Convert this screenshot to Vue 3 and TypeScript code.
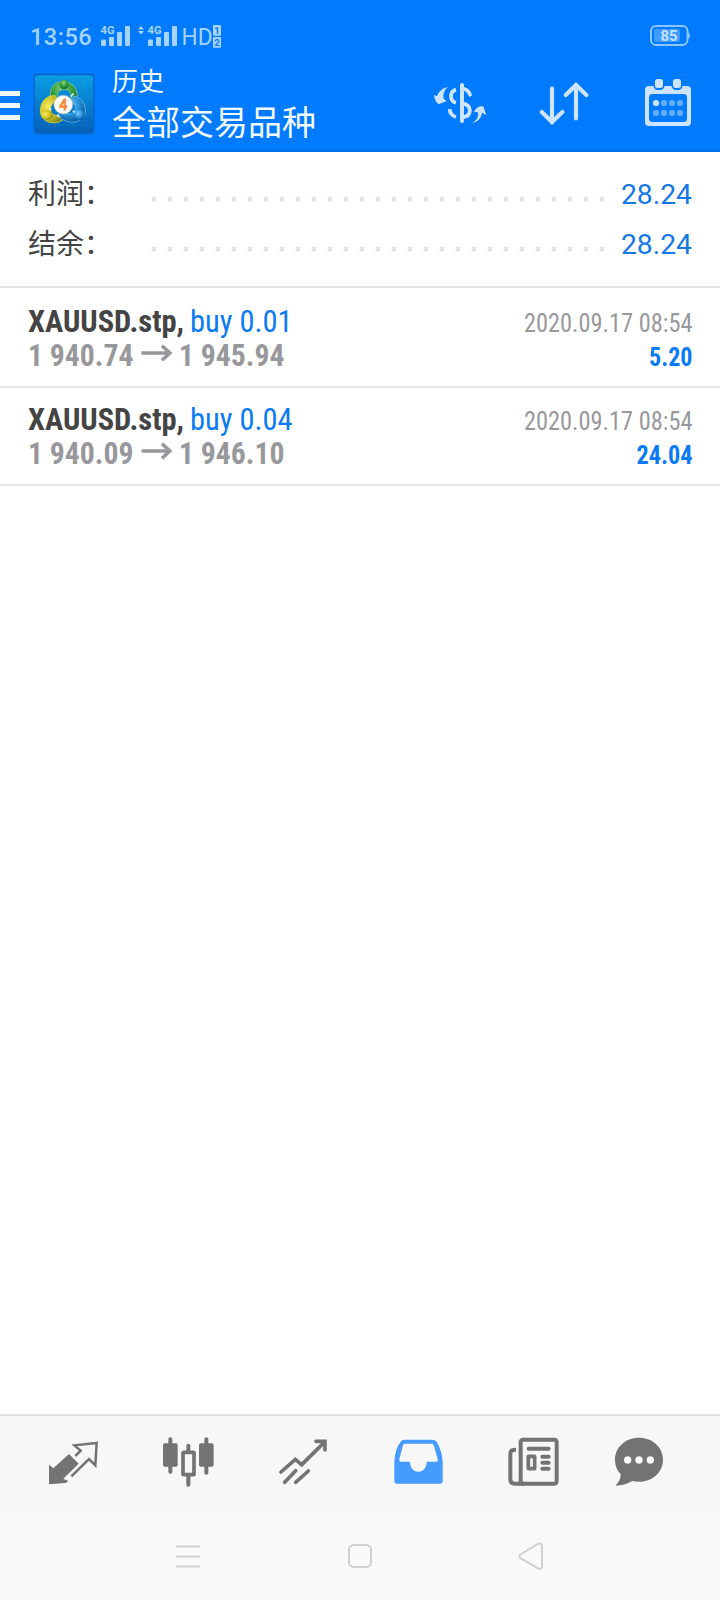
<script setup lang="ts">
interface Deal {
  symbol: string
  side: string
  sideWidth: number
  open: string
  close: string
  time: string
  profit: string
  profitWidth: number
}

const totals: { label: string; value: string }[] = [
  { label: '利润：', value: '28.24' },
  { label: '结余：', value: '28.24' },
]

const deals: Deal[] = [
  { symbol: 'XAUUSD.stp,', side: 'buy 0.01', sideWidth: 102.5, open: '1 940.74', close: '1 945.94', time: '2020.09.17 08:54', profit: '5.20', profitWidth: 43.5 },
  { symbol: 'XAUUSD.stp,', side: 'buy 0.04', sideWidth: 102.5, open: '1 940.09', close: '1 946.10', time: '2020.09.17 08:54', profit: '24.04', profitWidth: 56 },
]

const dots = Array.from({ length: 29 }, (_, i) => 3 + i * 16)
const bars = [
  { x: 0, h: 6.5 },
  { x: 8, h: 9 },
  { x: 16, h: 14 },
  { x: 24, h: 20 },
]
</script>

<template>
  <div class="screen">
    <header class="header">
      <div class="status">
        <span class="clock">13:56</span>
        <svg class="signals" width="126" height="28" viewBox="99 22 126 28">
          <g v-for="gx in [101, 148]" :key="gx" class="pale">
            <text :x="gx - 0.5" y="33.6" class="net" textLength="14" lengthAdjust="spacingAndGlyphs">4G</text>
            <rect v-for="b in bars" :key="b.x" :x="gx + b.x" :y="46 - b.h" width="5" :height="b.h" rx="1" />
          </g>
          <path class="pale" d="M138 29.500l3-3.500 3 3.500zM138 31l3 3.500 3-3.500z" />
          <text x="181.500" y="45" class="hd" textLength="31" lengthAdjust="spacingAndGlyphs">HD</text>
          <rect class="pale" x="213" y="25" width="8" height="10.800" rx="1" />
          <rect class="pale" x="213" y="37" width="8" height="10.800" rx="1" />
          <text x="217" y="33.800" class="sim">1</text>
          <text x="217" y="45.800" class="sim">2</text>
        </svg>
        <svg class="battery" width="42" height="24" viewBox="649 24 42 24">
          <rect x="651" y="26" width="36.500" height="19" rx="5" fill="none" stroke="#8cc6ff" stroke-width="2" />
          <rect x="654" y="29" width="26" height="13" rx="2" fill="#409bff" />
          <path d="M688 32.500q2 .5 2 3t-2 3z" fill="#8cc6ff" />
          <text x="669" y="41" class="charge">85</text>
        </svg>
      </div>
      <div class="toolbar">
        <div class="burger"><i /><i /><i /></div>
        <svg class="logo" width="62" height="62" viewBox="24 24 186 186">
          <defs>
            <linearGradient id="tile" x1="0" y1="0" x2="0" y2="1">
              <stop offset="0" stop-color="#0a9ce4" />
              <stop offset="1" stop-color="#0560b8" />
            </linearGradient>
            <radialGradient id="green" cx=".45" cy=".3" r=".7">
              <stop offset="0" stop-color="#8fd07c" />
              <stop offset=".5" stop-color="#37a33f" />
              <stop offset="1" stop-color="#0c6832" />
            </radialGradient>
            <radialGradient id="yellow" cx=".35" cy=".4" r=".7">
              <stop offset="0" stop-color="#f6ec62" />
              <stop offset=".55" stop-color="#cfc222" />
              <stop offset="1" stop-color="#7d8918" />
            </radialGradient>
            <radialGradient id="blue" cx=".4" cy=".35" r=".7">
              <stop offset="0" stop-color="#79cdf8" />
              <stop offset=".55" stop-color="#258fd6" />
              <stop offset="1" stop-color="#07529a" />
            </radialGradient>
          </defs>
          <rect x="26" y="26" width="182" height="182" rx="12" fill="#0863c4" />
          <rect x="30" y="31" width="174" height="172" rx="9" fill="url(#tile)" />
          <path d="M61 32V202M91 32V202M145 32V202M175 32V202M31 62H203M31 92H203M31 150H203M31 180H203" stroke="#38aceb" stroke-opacity=".22" stroke-width="2" />
          <path d="M88 119C66 94 75 55 108 50c38-5 60 34 42 68l-14-8c9-21-2-37-19-37-20 0-28 24-15 40z" fill="url(#green)" stroke="#8cc982" stroke-width="2.500" />
          <path d="M91 92c-31-3-51 28-43 57 8 24 41 32 64 17l1-15c-15 6-36-2-36-19 0-13 9-22 20-23z" fill="url(#yellow)" stroke="#d7d64e" stroke-width="2.500" />
          <path d="M146 93c27 4 44 38 31 61-14 23-54 24-79-2l15-13c17 13 35 9 38-5 3-10-4-22-15-23z" fill="url(#blue)" stroke="#66b9ed" stroke-width="2.500" />
          <path d="M96 148l9 9M137 95l9-10M143 138l12 6M78 130l-8 10" stroke="#fff" stroke-width="5" opacity=".75" />
          <circle cx="117" cy="59" r="14" fill="url(#green)" />
          <ellipse cx="66" cy="150" rx="18" ry="15" fill="url(#yellow)" />
          <circle cx="163" cy="150" r="16" fill="url(#blue)" />
          <circle cx="115" cy="119" r="28" fill="#fafafa" stroke="#bbc9b3" stroke-width="2" />
          <text x="115" y="135" class="four">4</text>
        </svg>
        <div class="titles">
          <div class="title-small">历史</div>
          <div class="title-large">全部交易品种</div>
        </div>
        <svg class="tool-money" width="56" height="56" viewBox="36 48 168 168">
          <path d="M42 104l9 5c5-15 17-25 33-28-10 7-16 21-13 35l9 7-22 9c-8-2-14-11-16-28z" fill="#cce4ff" />
          <path d="M157 188c15-7 20-21 16-31l-11-2c6-12 16-18 28-16l9 26-13-7c-2 16-13 28-29 30z" fill="#cce4ff" />
          <g fill="none" stroke="#cce4ff" stroke-width="11.500">
            <path d="M126 75V183" stroke-width="12" stroke-linecap="round" />
            <path d="M108 89Q93 93 93 109T108 128" />
            <path d="M89 147Q90 166 108 171" />
            <path d="M129 86Q145 89 150 104" stroke-linecap="round" />
            <path d="M128 130Q150 135 149.500 152T128 172" />
          </g>
        </svg>
        <svg class="tool-sort" width="56" height="56" viewBox="536 76 56 56">
          <path d="M552 88.500v34M541.800 112l10.200 10 10.400-10M576 118.500V85M565.800 95L576 85l10.400 10" fill="none" stroke="#cce4ff" stroke-width="4.200" stroke-linecap="round" stroke-linejoin="miter" />
        </svg>
        <svg class="tool-calendar" width="56" height="56" viewBox="640 76 56 56">
          <rect x="645" y="86" width="46" height="40" rx="4" fill="#cce4ff" />
          <rect x="649" y="94" width="38" height="28" rx="3.500" fill="#007aff" />
          <rect x="653.500" y="76" width="11" height="14" rx="4.500" fill="#007aff" />
          <rect x="671.500" y="76" width="11" height="14" rx="4.500" fill="#007aff" />
          <rect x="655" y="79" width="8" height="9" rx="2.500" fill="#cce4ff" />
          <rect x="673" y="79" width="8" height="9" rx="2.500" fill="#cce4ff" />
          <g fill="#66afff">
            <circle cx="664" cy="103" r="3.100" /><circle cx="672" cy="103" r="3.100" /><circle cx="680" cy="103" r="3.100" />
            <circle cx="656" cy="113" r="3.100" /><circle cx="664" cy="113" r="3.100" /><circle cx="672" cy="113" r="3.100" /><circle cx="680" cy="113" r="3.100" />
          </g>
          <circle cx="656" cy="103" r="3.100" fill="#cce4ff" />
        </svg>
      </div>
    </header>

    <section class="totals">
      <div v-for="t in totals" :key="t.label" class="total">
        <span class="total-label">{{ t.label }}</span>
        <svg class="leader" width="454" height="6" viewBox="0 0 454 6">
          <circle v-for="x in dots" :key="x" :cx="x" cy="3" r="2.600" />
        </svg>
        <span class="total-value">{{ t.value }}</span>
      </div>
    </section>

    <main class="deals">
      <article v-for="d in deals" :key="d.open" class="deal">
        <div class="line">
          <svg width="290" height="34" viewBox="28 0 290 34">
            <text x="28" y="28" class="symbol" textLength="156" lengthAdjust="spacingAndGlyphs">{{ d.symbol }}</text>
            <text x="190" y="28" class="side" :textLength="d.sideWidth" lengthAdjust="spacingAndGlyphs">{{ d.side }}</text>
          </svg>
          <svg width="180" height="34" viewBox="512 0 180 34">
            <text x="524" y="28" class="time" textLength="168.500" lengthAdjust="spacingAndGlyphs">{{ d.time }}</text>
          </svg>
        </div>
        <div class="line">
          <svg width="290" height="34" viewBox="28 0 290 34">
            <text x="28" y="28" class="price" textLength="105.500" lengthAdjust="spacingAndGlyphs">{{ d.open }}</text>
            <path d="M141.500 15H170M162 7.800l7.800 7.200-7.800 7.200" fill="none" stroke="#98989c" stroke-width="3.600" />
            <text x="179" y="28" class="price" textLength="105.500" lengthAdjust="spacingAndGlyphs">{{ d.close }}</text>
          </svg>
          <svg width="180" height="34" viewBox="512 0 180 34">
            <text :x="692.500 - d.profitWidth" y="28" class="profit" :textLength="d.profitWidth" lengthAdjust="spacingAndGlyphs">{{ d.profit }}</text>
          </svg>
        </div>
      </article>
    </main>

    <nav class="tabs">
      <svg width="56" height="56" viewBox="135 85 168 168">
        <path d="M147 180l13 11 47-43 29 29-46 45 15 7-8 6-50 4z" fill="#737373" />
        <path d="M226 154l16-16-11-9-8-7 67-7-4 67-19-19-53 52" fill="none" stroke="#737373" stroke-width="7.500" />
      </svg>
      <svg width="56" height="56" viewBox="480 85 168 168">
        <path d="M511 104V201M619 104V204M565 123V240" stroke="#737373" stroke-width="12" stroke-linecap="round" />
        <rect x="489" y="116" width="44" height="70" rx="5" fill="#737373" />
        <rect x="597" y="116" width="44" height="70" rx="5" fill="#737373" />
        <rect x="549" y="143" width="33" height="67" rx="2" fill="#f7f7f7" stroke="#737373" stroke-width="11" />
      </svg>
      <svg width="56" height="56" viewBox="825 85 168 168">
        <path d="M843 202l43-38 19 16 69-68M948 110h27v26M854 233l33-35M887 233l38-34" fill="none" stroke="#737373" stroke-width="11" stroke-linecap="round" />
      </svg>
      <svg width="56" height="56" viewBox="90 85 168 168">
        <path fill-rule="evenodd" d="M103 169Q105 133 122 111 126 105 134 105H217Q225 105 230 111 245 136 248 169V229Q248 237 240 237H111Q103 237 103 229ZM135 117Q131 117 129 121L118 163Q117 171 121 171H150C150 211 200 211 200 171H229Q235 171 233 163L221 121Q219 117 215 117Z" fill="#459cff" />
      </svg>
      <svg width="56" height="56" viewBox="435 85 168 168">
        <g fill="none" stroke="#737373" stroke-width="12">
          <rect x="482" y="105" width="108" height="132" rx="7" />
          <path d="M468 135h-4q-13 0-13 13v76q0 13 13 13h30" />
          <path d="M506 132h60M547 156h19M547 174h19M547 192h19" stroke-linecap="round" />
          <rect x="505" y="155" width="19" height="37" rx="1" stroke-width="11" />
        </g>
      </svg>
      <svg width="56" height="56" viewBox="753 85 168 168">
        <path d="M837 99c41 0 72 29 72 66s-31 66-72 66q-12 0-20-2-23 14-51 14 17-16 16-34-17-18-17-44c0-37 31-66 72-66z" fill="#737373" />
        <circle cx="803" cy="166" r="11" fill="#f8f8f8" /><circle cx="837" cy="166" r="11" fill="#f8f8f8" /><circle cx="871" cy="166" r="11" fill="#f8f8f8" />
      </svg>
    </nav>

    <footer class="system">
      <svg width="28" height="28" viewBox="174 1542 28 28">
        <path d="M176 1546.500h24M176 1556.500h24M176 1566.500h24" stroke="#d0d0d0" stroke-width="2.200" />
      </svg>
      <svg width="28" height="28" viewBox="346 1542 28 28">
        <rect x="349" y="1545" width="22" height="22" rx="5" fill="none" stroke="#d0d0d0" stroke-width="2" />
      </svg>
      <svg width="28" height="28" viewBox="518 1542 28 28">
        <path d="M520.500 1554.500l17-10.300q4.500-2 4.500 2v20q0 4-4.500 2l-17-10q-2.500-1.900 0-3.700z" fill="none" stroke="#d0d0d0" stroke-width="2" />
      </svg>
    </footer>
  </div>
</template>

<style>
body {
  margin: 0;
  background: #fff;
}
</style>

<style scoped>
.screen {
  width: 720px;
  height: 1600px;
  display: flex;
  flex-direction: column;
  background: #fff;
  font-family: Roboto, 'Noto Sans CJK SC', sans-serif;
  overflow: hidden;
}
svg {
  display: block;
  flex: none;
}
.header {
  box-sizing: border-box;
  height: 152px;
  flex: none;
  background: #007aff;
  border-bottom: 2px solid #0070e8;
}
.status {
  display: flex;
  height: 72px;
  padding-left: 30px;
  box-sizing: border-box;
}
.clock {
  width: 69px;
  padding-top: 22px;
  font-size: 23.5px;
  font-weight: 500;
  line-height: 30px;
  letter-spacing: 0.5px;
  color: #a6d3ff;
}
.signals {
  margin-top: 22px;
}
.battery {
  margin: 24px 0 0 424px;
}
.pale {
  fill: #a6d3ff;
}
.net {
  font: 700 10.5px Roboto, sans-serif;
}
.hd {
  font: 400 24px Roboto, sans-serif;
  fill: #a6d3ff;
}
.sim {
  font: 700 9.5px Roboto, sans-serif;
  fill: #007aff;
  text-anchor: middle;
}
.charge {
  font: 700 15px Roboto, sans-serif;
  fill: #c4e3ff;
  text-anchor: middle;
}
.toolbar {
  display: flex;
  height: 78px;
}
.burger {
  display: flex;
  flex-direction: column;
  gap: 7px;
  width: 20px;
  padding-top: 19px;
}
.burger i {
  height: 5px;
  background: #f2f8ff;
}
.logo {
  margin: 1px 0 0 13px;
}
.four {
  font: 400 43px Roboto, sans-serif;
  fill: #ffd9a8;
  stroke: #ef8a38;
  stroke-width: 3px;
  text-anchor: middle;
}
.titles {
  width: 321px;
  padding-left: 17px;
  box-sizing: border-box;
  color: #f2f8ff;
}
.title-small {
  height: 31px;
  margin-top: -5px;
  font-size: 26px;
  line-height: 31px;
}
.title-large {
  font-size: 34px;
  line-height: 51px;
  white-space: nowrap;
}
.tool-money {
  margin: 4px 0 0 16px;
}
.tool-sort {
  margin: 4px 0 0 48px;
}
.tool-calendar {
  margin: 4px 0 0 48px;
}
.totals {
  height: 136px;
  box-sizing: border-box;
  flex: none;
  padding: 15px 28px 0;
  border-bottom: 2px solid #e4e4e4;
}
.total {
  display: flex;
  height: 50px;
}
.total-label {
  width: 122px;
  font-size: 28px;
  line-height: 56px;
  color: #444;
}
.leader {
  margin-top: 29px;
  margin-left: 0.5px;
  fill: #e4e4e4;
}
.total-value {
  flex: 1;
  text-align: right;
  font-size: 28.3px;
  line-height: 56px;
  color: #1478e6;
}
.deals {
  flex: 1;
  padding-top: 2px;
}
.deal {
  height: 98px;
  box-sizing: border-box;
  padding: 14px 28px 0;
  border-bottom: 2px solid #e4e4e4;
}
.line {
  display: flex;
  justify-content: space-between;
}
.line svg {
  overflow: visible;
}
.line text {
  font-family: 'Roboto Condensed', Roboto, sans-serif;
  font-stretch: 75%;
}
.symbol {
  font-size: 32px;
  font-weight: 700;
  fill: #444;
}
.side {
  font-size: 32px;
  fill: #0a7af5;
}
.time {
  font-size: 26px;
  fill: #98989c;
}
.price {
  font-size: 32px;
  font-weight: 700;
  fill: #98989c;
}
.profit {
  font-size: 26px;
  font-weight: 700;
  fill: #0a7af5;
}
.tabs {
  display: grid;
  grid-template-columns: repeat(5, 115px) 97px;
  justify-items: center;
  height: 98px;
  box-sizing: border-box;
  flex: none;
  padding: 17px 0 0 15.5px;
  border-top: 2px solid #e3e3e3;
  background: #f7f7f7;
}
.system {
  display: flex;
  justify-content: space-between;
  height: 88px;
  box-sizing: border-box;
  flex: none;
  padding: 30px 174px 0 174px;
  background: #f9f9f9;
}
</style>
